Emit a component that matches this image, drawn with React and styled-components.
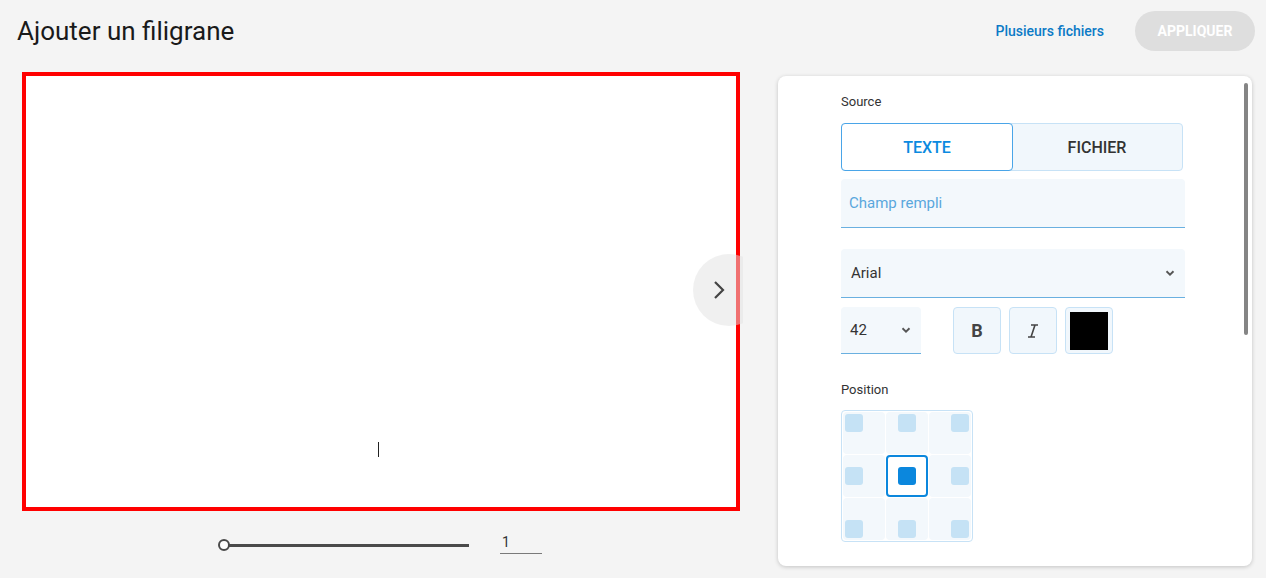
import styled, { createGlobalStyle } from "styled-components";

const Global = createGlobalStyle`
  html, body {
    margin: 0;
    background: #f4f4f4;
    font-family: Roboto, "Liberation Sans", sans-serif;
  }
  * { box-sizing: border-box; }
`;

const Page = styled.div`
  width: 1266px;
  height: 578px;
  overflow: hidden;
`;

const Header = styled.header`
  height: 62px;
  display: flex;
  align-items: center;
  padding: 0 11px 0 17px;
`;

const Title = styled.h1`
  margin: 0;
  font-size: 26px;
  font-weight: 400;
  color: #1a1a1a;
  flex: 1;
`;

const LinkButton = styled.a`
  color: #0b7ac6;
  font-size: 14px;
  font-weight: 500;
  margin-right: 31px;
  cursor: pointer;
`;

const ApplyButton = styled.button`
  width: 120px;
  height: 40px;
  border: none;
  border-radius: 20px;
  background: #dedede;
  color: #fff;
  font-family: inherit;
  font-weight: 700;
  font-size: 14px;
`;

const Main = styled.div`
  display: flex;
  padding: 10px 0 0 22px;
  gap: 38px;
`;

const LeftCol = styled.div`
  width: 718px;
  display: flex;
  flex-direction: column;
  align-items: center;
`;

const PreviewWrap = styled.div`
  width: 721px;
  align-self: flex-start;
  position: relative;
  overflow: hidden;
`;

const Preview = styled.div`
  width: 718px;
  height: 439px;
  background: #fff;
  border: 4px solid #ff0000;
  position: relative;
`;

const Caret = styled.span`
  position: absolute;
  left: 352px;
  top: 366px;
  width: 1px;
  height: 15px;
  background: #222;
`;

const NextButton = styled.div`
  position: absolute;
  left: 671px;
  top: 182px;
  width: 72px;
  height: 72px;
  border-radius: 50%;
  background: rgba(225, 225, 225, 0.5);
  display: flex;
  align-items: center;
  justify-content: flex-start;
  padding-left: 18px;
`;

const SliderRow = styled.div`
  display: flex;
  align-items: center;
  margin-top: 26px;
  margin-left: 4px;
  gap: 31px;
`;

const Track = styled.div`
  width: 245px;
  height: 3px;
  background: #4a4a4a;
  position: relative;
`;

const Thumb = styled.span`
  position: absolute;
  left: -6px;
  top: -5px;
  width: 12px;
  height: 12px;
  border-radius: 50%;
  background: #fff;
  border: 2px solid #4a4a4a;
`;

const PageInput = styled.div`
  width: 42px;
  border-bottom: 1px solid #7a7a7a;
  font-size: 14px;
  color: #333;
  padding: 0 0 3px 2px;
  margin-top: -3px;
`;

const Card = styled.div`
  width: 474px;
  height: 490px;
  margin-top: 4px;
  background: #fff;
  border-radius: 8px;
  box-shadow: 0 1px 4px rgba(0, 0, 0, 0.2);
  padding: 18px 0 0 63px;
  position: relative;
`;

const ScrollThumb = styled.span`
  position: absolute;
  right: 4px;
  top: 7px;
  width: 4px;
  height: 252px;
  background: #858585;
  border-radius: 2px;
`;

const Form = styled.div`
  width: 344px;
  display: flex;
  flex-direction: column;
`;

const Label = styled.div`
  font-size: 13px;
  font-weight: 400;
  color: #333;
  margin-top: ${(p) => p.$mt || 0}px;
  margin-bottom: ${(p) => p.$mb || 13}px;
`;

const Toggle = styled.div`
  display: flex;
  height: 48px;
  width: 342px;
  background: #f1f7fc;
  border: 1px solid #c7e2f6;
  border-radius: 4px;
`;

const ToggleOption = styled.div`
  flex: 1;
  display: flex;
  align-items: center;
  justify-content: center;
  font-size: 16px;
  font-weight: 500;
  margin: -1px;
  border-radius: 4px;
  color: ${(p) => (p.$active ? "#0b8ae0" : "#333")};
  background: ${(p) => (p.$active ? "#fff" : "transparent")};
  border: 1px solid ${(p) => (p.$active ? "#4aa5e8" : "transparent")};
`;

const Field = styled.div`
  height: ${(p) => p.$h || 49}px;
  width: ${(p) => p.$w || 344}px;
  background: #f3f8fc;
  border-bottom: 1px solid #6ab0e0;
  border-radius: 4px 4px 0 0;
  display: flex;
  align-items: center;
  padding: 0 8px 0 ${(p) => p.$pl || 8}px;
  font-size: ${(p) => p.$fs || 15}px;
  color: ${(p) => p.$color || "#333"};
  margin-top: ${(p) => p.$mt || 0}px;
`;

const Grow = styled.span`
  flex: 1;
`;

const Row = styled.div`
  display: flex;
  align-items: center;
  margin-top: 9px;
`;

const StyleButton = styled.div`
  width: 48px;
  height: 47px;
  border: 1px solid #c7e2f6;
  border-radius: 4px;
  background: #f1f7fc;
  margin-left: ${(p) => p.$ml || 8}px;
  display: flex;
  align-items: center;
  justify-content: center;
  color: #444;
  font-size: 18px;
`;

const Swatch = styled.span`
  width: 38px;
  height: 38px;
  background: #000;
`;

const Grid = styled.div`
  width: 132px;
  height: 132px;
  border: 1px solid #c7e2f6;
  border-radius: 4px;
  display: grid;
  grid-template-columns: repeat(3, 1fr);
  grid-template-rows: repeat(3, 1fr);
  gap: 1px;
  background: #fff;
  padding: 1px;
`;

const Cell = styled.div`
  background: ${(p) => (p.$active ? "#fff" : "#f3f8fc")};
  border: ${(p) => (p.$active ? "2px solid #0b87dd" : "none")};
  border-radius: 4px;
  display: flex;
  padding: ${(p) => (p.$active ? 0 : 2)}px;
  align-items: ${(p) => p.$v};
  justify-content: ${(p) => p.$h};
`;

const Dot = styled.span`
  width: 18px;
  height: 18px;
  border-radius: 3px;
  background: ${(p) => (p.$active ? "#0b87dd" : "#c5e2f5")};
`;

const Chevron = ({ size = 14 }) => (
  <svg width={size} height={size} viewBox="0 0 12 12">
    <path d="M3 4.5 L6 7.5 L9 4.5" fill="none" stroke="#555" strokeWidth="1.6" />
  </svg>
);

const aligns = ["flex-start", "center", "flex-end"];

export default function App() {
  const cells = [];
  for (let r = 0; r < 3; r++) {
    for (let c = 0; c < 3; c++) {
      const active = r === 1 && c === 1;
      cells.push(
        <Cell key={`${r}-${c}`} $active={active} $v={aligns[r]} $h={aligns[c]}>
          <Dot $active={active} />
        </Cell>
      );
    }
  }

  return (
    <Page>
      <Global />
      <Header>
        <Title>Ajouter un filigrane</Title>
        <LinkButton>Plusieurs fichiers</LinkButton>
        <ApplyButton>APPLIQUER</ApplyButton>
      </Header>
      <Main>
        <LeftCol>
          <PreviewWrap>
            <Preview>
              <Caret />
            </Preview>
            <NextButton>
              <svg width="16" height="24" viewBox="0 0 16 24">
                <path d="M4 4 L12 12 L4 20" fill="none" stroke="#444" strokeWidth="2.2" />
              </svg>
            </NextButton>
          </PreviewWrap>
          <SliderRow>
            <Track>
              <Thumb />
            </Track>
            <PageInput>1</PageInput>
          </SliderRow>
        </LeftCol>
        <Card>
          <ScrollThumb />
          <Form>
            <Label $mb={14}>Source</Label>
            <Toggle>
              <ToggleOption $active>TEXTE</ToggleOption>
              <ToggleOption>FICHIER</ToggleOption>
            </Toggle>
            <Field $mt={8} $color="#5aa7dd">Champ rempli</Field>
            <Field $mt={21} $pl={10}>
              <Grow>Arial</Grow>
              <Chevron />
            </Field>
            <Row>
              <Field $w={80} $h={47} $pl={9} $fs={15}>
                <Grow>42</Grow>
                <Chevron />
              </Field>
              <StyleButton $ml={32}>
                <b>B</b>
              </StyleButton>
              <StyleButton>
                <svg width="14" height="16" viewBox="0 0 14 16">
                  <path d="M5 2 H12 M2 14 H9 M9 2 L5 14" fill="none" stroke="#444" strokeWidth="1.6" />
                </svg>
              </StyleButton>
              <StyleButton>
                <Swatch />
              </StyleButton>
            </Row>
            <Label $mt={28} $mb={13}>Position</Label>
            <Grid>{cells}</Grid>
          </Form>
        </Card>
      </Main>
    </Page>
  );
}
